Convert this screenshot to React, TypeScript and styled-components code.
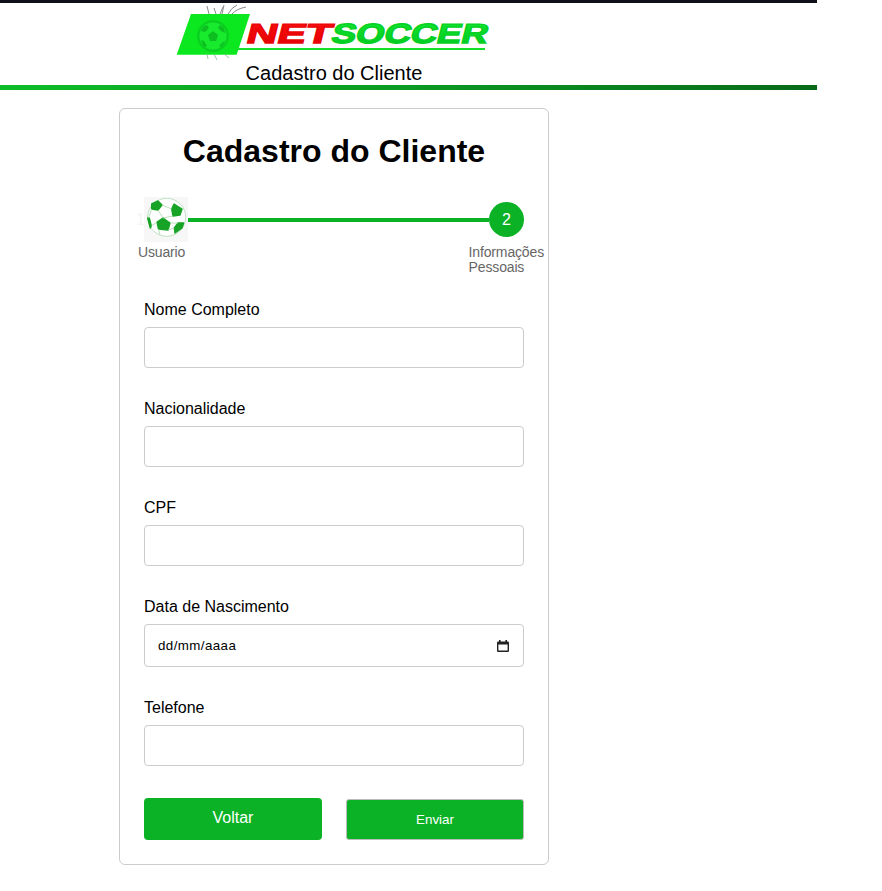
import React from "react";
import styled, { createGlobalStyle } from "styled-components";

const Global = createGlobalStyle`
  html, body { margin: 0; padding: 0; background: #fff; }
  body { font-family: "Liberation Sans", Arial, sans-serif; color: #000; }
  * { box-sizing: border-box; }
`;

const Page = styled.div`
  width: 817px;
`;

const Header = styled.header`
  border-top: 3px solid #0f0f1a;
  display: flex;
  flex-direction: column;
  width: 100%;
`;

const HeaderInner = styled.div`
  width: 668px;
  height: 82px;
  display: flex;
  flex-direction: column;
  align-items: center;
`;

const LogoSvg = styled.svg`
  display: block;
  flex: none;
`;

const Subtitle = styled.div`
  font-size: 20px;
  line-height: 23px;
  margin-top: -1px;
  text-align: center;
`;

const GreenBar = styled.div`
  width: 100%;
  height: 5px;
  background: linear-gradient(90deg, #0dbd28 0%, #0b9a22 50%, #086a18 100%);
`;

const Main = styled.main`
  width: 668px;
  display: flex;
  justify-content: center;
  padding-top: 18px;
`;

const Card = styled.section`
  width: 430px;
  height: 757px;
  border: 1px solid #ccc;
  border-radius: 6px;
  padding: 24px;
  display: flex;
  flex-direction: column;
`;

const Title = styled.h1`
  margin: 0;
  font-size: 32px;
  line-height: 37px;
  font-weight: 700;
  text-align: center;
`;

const StepTrack = styled.div`
  position: relative;
  display: flex;
  align-items: center;
  height: 45px;
  margin-top: 27px;
`;

const GhostNumber = styled.span`
  position: absolute;
  left: -8px;
  top: 14px;
  font-size: 16px;
  line-height: 18px;
  color: #f4f4f4;
`;

const BallSvg = styled.svg`
  display: block;
  flex: none;
`;

const StepLine = styled.div`
  flex: 1;
  height: 4px;
  background: #0cb226;
`;

const StepCircle = styled.div`
  width: 35px;
  height: 35px;
  border-radius: 50%;
  background: #0cb226;
  color: #fff;
  font-size: 16px;
  display: flex;
  align-items: center;
  justify-content: center;
`;

const StepLabels = styled.div`
  display: flex;
  justify-content: space-between;
  margin: 3px -20px 0 -6px;
  height: 30px;
`;

const StepLabel = styled.span`
  font-size: 14px;
  line-height: 15px;
  letter-spacing: -0.15px;
  color: #666;
`;

const Form = styled.form`
  display: flex;
  flex-direction: column;
  gap: 32px;
  margin-top: 26px;
`;

const Field = styled.div`
  display: flex;
  flex-direction: column;
`;

const Label = styled.label`
  font-size: 16px;
  line-height: 18px;
  margin-bottom: 8px;
`;

const TextInput = styled.input`
  width: 100%;
  height: 41px;
  border: 1px solid #ccc;
  border-radius: 4px;
  padding: 0 12px;
  font-size: 16px;
  font-family: inherit;
  background: #fff;
  outline: none;
`;

const DateBox = styled.div`
  width: 100%;
  height: 43px;
  border: 1px solid #ccc;
  border-radius: 4px;
  padding: 0 13px;
  display: flex;
  align-items: center;
  justify-content: space-between;
`;

const DateText = styled.span`
  font-size: 13.33px;
  letter-spacing: 0.42px;
  color: #000;
`;

const Buttons = styled.div`
  display: flex;
  align-items: center;
  justify-content: space-between;
  margin-top: 32px;
`;

const BackButton = styled.button`
  width: 178px;
  height: 42px;
  border: none;
  border-radius: 4px;
  background: #0cb226;
  color: #fff;
  font-family: inherit;
  font-size: 16px;
  padding: 0 0 2px;
`;

const SubmitButton = styled.button`
  width: 178px;
  height: 41px;
  border: 1px solid #bbb;
  border-radius: 3px;
  background: #0cb226;
  color: #fff;
  font-family: inherit;
  font-size: 13.33px;
  padding: 0;
`;

const logoFont = "'Liberation Sans', Arial, sans-serif";

const Logo = () => (
  <LogoSvg width="320" height="60" viewBox="174 3 320 60">
    <defs>
      <linearGradient id="redText" x1="0" y1="0" x2="0" y2="1">
        <stop offset="0" stopColor="#ff1010" />
        <stop offset="1" stopColor="#e00000" />
      </linearGradient>
      <linearGradient id="greenText" x1="0" y1="0" x2="0" y2="1">
        <stop offset="0" stopColor="#10ec30" />
        <stop offset="1" stopColor="#00c420" />
      </linearGradient>
    </defs>
    <g stroke="#8a8a8a" strokeWidth="1" fill="none">
      <path d="M207 6 L209 14 M214 8 L216 14 M222 14 L224 5 M220 14 L223 7 M228 14 Q231 8 237 5 M232 14 Q236 9 246 7" />
    </g>
    <polygon points="191,14 250,14 236.7,54.7 176.7,54.7" fill="#0ce81f" />
    <circle cx="213" cy="36" r="16" fill="#0bcf20" />
    <circle cx="213" cy="36" r="13.5" fill="#18ea2e" />
    <g fill="#0cbe20">
      <polygon points="213,31 218,35 216,41 210,41 208,35" />
      <polygon points="203,27 207,25 209,28 205,32 201,31" />
      <polygon points="220,25 224,28 225,33 221,31 218,28" />
      <polygon points="201,40 204,41 207,46 204,47" />
      <polygon points="219,46 223,42 225,41 222,47" />
    </g>
    <g stroke="#7fb98a" strokeWidth="0.8" fill="none">
      <path d="M207 54 L208 59 M214 54 L217 60 M224 54 L229 58" />
    </g>
    <polygon points="236.7,48 485,48 485,50 236,50" fill="#12e02a" />
    <g transform="translate(245 43) skewX(-14)">
      <text fontFamily={logoFont} fontSize="27.5" fontWeight="700" fill="url(#redText)" stroke="#e80606" strokeWidth="1.4" textLength="85" lengthAdjust="spacingAndGlyphs">NET</text>
    </g>
    <g transform="translate(330 43) skewX(-14)">
      <text fontFamily={logoFont} fontSize="27.5" fontWeight="700" fill="url(#greenText)" stroke="#06d024" strokeWidth="1.4" textLength="156" lengthAdjust="spacingAndGlyphs">SOCCER</text>
    </g>
  </LogoSvg>
);

const Ball = () => (
  <BallSvg width="44" height="45" viewBox="0 0 44 45">
    <rect width="44" height="45" fill="#f7f7f7" />
    <circle cx="22.7" cy="20.3" r="19" fill="#fff" stroke="#bfe3c2" strokeWidth="1" />
    <g fill="#17a326" stroke="#17a326" strokeWidth="1.4" strokeLinejoin="round">
      <polygon points="19,21 26,26 24,33 14.5,32 13,25" />
      <polygon points="7.7,7 14,4 18,8 14,13 7.7,12" />
      <polygon points="30,7 38,12 36,18 29,19 27.7,12" />
      <polygon points="39.6,26 38,31 31,36 30.3,31 34,26" />
      <polygon points="3.7,21 5.3,21 7.3,29 6.3,31" />
    </g>
    <g stroke="#a8d6ac" strokeWidth="0.8" fill="none">
      <path d="M14 13 L19 21 M29 19 L19 21 M18 8 L27.7 12 M7.7 12 L4.5 21 M7.3 29 L13 25 M26 26 L34 26 M14.5 32 L16 38 M24 33 L30.3 31" />
    </g>
  </BallSvg>
);

const CalendarIcon = () => (
  <svg width="14" height="14" viewBox="0 0 14 14" style={{ display: "block" }}>
    <path d="M3 1h1.6v1.4h4.8V1H11v1.4h.7c.7 0 1.3.6 1.3 1.3v8c0 .7-.6 1.3-1.3 1.3H2.3C1.6 13 1 12.4 1 11.7v-8c0-.7.6-1.3 1.3-1.3H3V1zm-.6 4.4v6.2h9.2V5.4H2.4z" fill="#222" />
  </svg>
);

const fields = ["Nome Completo", "Nacionalidade", "CPF"];

export default function App() {
  return (
    <Page>
      <Global />
      <Header>
        <HeaderInner>
          <Logo />
          <Subtitle>Cadastro do Cliente</Subtitle>
        </HeaderInner>
        <GreenBar />
      </Header>
      <Main>
        <Card>
          <Title>Cadastro do Cliente</Title>
          <StepTrack>
            <GhostNumber>1</GhostNumber>
            <Ball />
            <StepLine />
            <StepCircle>2</StepCircle>
          </StepTrack>
          <StepLabels>
            <StepLabel>Usuario</StepLabel>
            <StepLabel>
              Informações
              <br />
              Pessoais
            </StepLabel>
          </StepLabels>
          <Form>
            {fields.map((f) => (
              <Field key={f}>
                <Label>{f}</Label>
                <TextInput type="text" />
              </Field>
            ))}
            <Field>
              <Label>Data de Nascimento</Label>
              <DateBox>
                <DateText>dd/mm/aaaa</DateText>
                <CalendarIcon />
              </DateBox>
            </Field>
            <Field>
              <Label>Telefone</Label>
              <TextInput type="tel" />
            </Field>
          </Form>
          <Buttons>
            <BackButton type="button">Voltar</BackButton>
            <SubmitButton type="submit">Enviar</SubmitButton>
          </Buttons>
        </Card>
      </Main>
    </Page>
  );
}
